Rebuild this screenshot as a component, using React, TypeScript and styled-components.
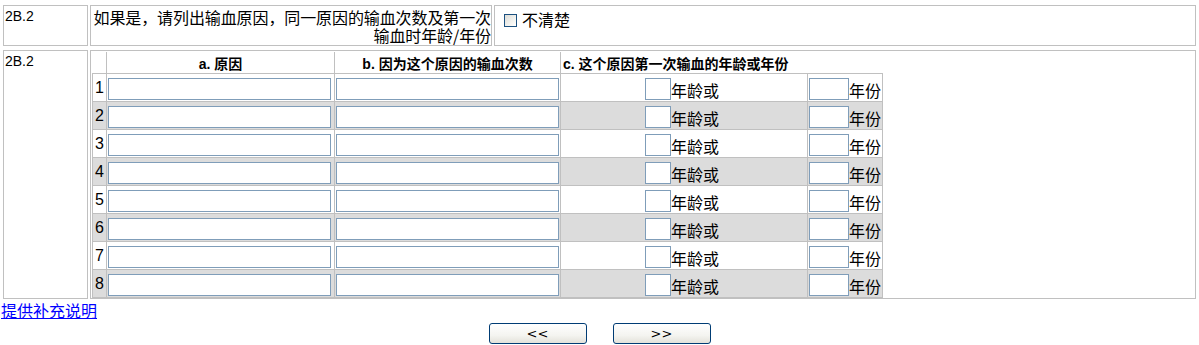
import React from "react";
import styled, { createGlobalStyle } from "styled-components";

const GlobalStyle = createGlobalStyle`
  body {
    margin: 0;
    background: #fff;
    color: #000;
    font-family: "Liberation Sans", "Noto Sans CJK SC", sans-serif;
  }
`;

const Page = styled.div`
  padding: 3px 1px 0;
`;

const QTable = styled.table`
  width: 100%;
  border-collapse: separate;
  border-spacing: 2px;
`;

const Cell = styled.td`
  box-sizing: border-box;
  border: 1px solid #c0c0c0;
  vertical-align: top;
`;

const LabelCell = styled(Cell)`
  width: 85px;
  padding: 2px 1px 0;
  font-size: 14px;
  line-height: 16px;
`;

const QuestionCell = styled(Cell)`
  width: 402px;
  padding: 2px 0 1px;
  font-size: 16px;
  line-height: 18px;
  text-align: right;
  white-space: nowrap;
  letter-spacing: -0.1px;
  font-family: "Noto Sans CJK SC", "Liberation Sans", sans-serif;
`;

const AnswerCell = styled(Cell)`
  padding: 4px 2px 0 9px;
  font-size: 16px;
  line-height: 18px;
  font-family: "Noto Sans CJK SC", "Liberation Sans", sans-serif;
`;

const GridCell = styled(Cell)`
  padding: 1px 1px 0;
`;

const Check = styled.input`
  appearance: none;
  box-sizing: border-box;
  width: 13px;
  height: 13px;
  margin: 0 5px 0 0;
  vertical-align: -1px;
  border: 1px solid #1c5180;
  background: linear-gradient(135deg, #dcdcd7 0%, #f6f6f3 70%, #fff 100%);
`;

const Grid = styled.table`
  border-collapse: collapse;
  table-layout: fixed;
  width: 790px;
`;

const Head = styled.th<{ $align?: string; $first?: boolean }>`
  height: 21px;
  padding: 0 2px;
  font-size: 14px;
  font-weight: bold;
  text-align: ${(p) => p.$align || "center"};
  border-left: ${(p) => (p.$first ? "none" : "1px solid #c0c0c0")};
  white-space: nowrap;
  font-family: "Liberation Sans", "Noto Sans CJK SC", sans-serif;
`;

const Row = styled.tr<{ $shaded: boolean }>`
  background: ${(p) => (p.$shaded ? "#dcdcdc" : "#fff")};
`;

const Td = styled.td<{ $align?: string }>`
  height: 27px;
  padding: 0 2px;
  border: 1px solid #c0c0c0;
  text-align: ${(p) => p.$align || "left"};
  vertical-align: middle;
  white-space: nowrap;
  font-size: 16px;
  font-family: "Noto Sans CJK SC", "Liberation Sans", sans-serif;
`;

const InputTd = styled(Td)`
  padding: 0 1px;
`;

const NumTd = styled(Td)`
  padding: 0;
  font-family: "Liberation Sans", sans-serif;
`;

const AgeTd = styled(Td)`
  padding: 0 4px 0 0;
`;

const YearTd = styled(Td)`
  padding: 0 1px;
`;

const TextBox = styled.input<{ $w: number }>`
  box-sizing: border-box;
  width: ${(p) => p.$w}px;
  height: 22px;
  margin: 0;
  padding: 1px 2px;
  border: 1px solid #7f9db9;
  background: #fff;
  vertical-align: middle;
`;

const Unit = styled.span`
  vertical-align: middle;
  line-height: 18px;
`;

const MoreLink = styled.a`
  display: inline-block;
  color: #0000ff;
  text-decoration: underline;
  font-size: 16px;
  line-height: 18px;
  font-family: "Noto Sans CJK SC", "Liberation Sans", sans-serif;
`;

const Buttons = styled.div`
  display: flex;
  justify-content: center;
  gap: 26px;
  margin-top: 2px;
`;

const NavButton = styled.button`
  box-sizing: border-box;
  width: 98px;
  height: 21px;
  padding: 0;
  border: 1px solid #003c74;
  border-radius: 3px;
  background: linear-gradient(to bottom, #ffffff 0%, #f4f4f0 60%, #e3e2da 100%);
  font-family: "DejaVu Sans", sans-serif;
  font-size: 13px;
  line-height: 17px;
  color: #000;
`;

const rows = [1, 2, 3, 4, 5, 6, 7, 8];

export default function App() {
  return (
    <Page>
      <GlobalStyle />
      <QTable>
        <tbody>
          <tr>
            <LabelCell>2B.2</LabelCell>
            <QuestionCell>
              如果是，请列出输血原因，同一原因的输血次数及第一次
              <br />
              输血时年龄/年份
            </QuestionCell>
            <AnswerCell>
              <Check type="checkbox" />
              不清楚
            </AnswerCell>
          </tr>
        </tbody>
      </QTable>
      <QTable>
        <tbody>
          <tr>
            <LabelCell>2B.2</LabelCell>
            <GridCell>
              <Grid>
                <colgroup>
                  <col style={{ width: 14 }} />
                  <col style={{ width: 228 }} />
                  <col style={{ width: 226 }} />
                  <col style={{ width: 247 }} />
                  <col style={{ width: 75 }} />
                </colgroup>
                <thead>
                  <tr>
                    <Head $first />
                    <Head>a. 原因</Head>
                    <Head>b. 因为这个原因的输血次数</Head>
                    <Head colSpan={2} $align="left">
                      c. 这个原因第一次输血的年龄或年份
                    </Head>
                  </tr>
                </thead>
                <tbody>
                  {rows.map((n) => (
                    <Row key={n} $shaded={n % 2 === 0}>
                      <NumTd $align="center">{n}</NumTd>
                      <InputTd>
                        <TextBox $w={223} />
                      </InputTd>
                      <InputTd>
                        <TextBox $w={223} />
                      </InputTd>
                      <AgeTd $align="center">
                        <TextBox $w={26} />
                        <Unit>年龄或</Unit>
                      </AgeTd>
                      <YearTd>
                        <TextBox $w={40} />
                        <Unit>年份</Unit>
                      </YearTd>
                    </Row>
                  ))}
                </tbody>
              </Grid>
            </GridCell>
          </tr>
        </tbody>
      </QTable>
      <MoreLink href="#">提供补充说明</MoreLink>
      <Buttons>
        <NavButton>&lt;&lt;</NavButton>
        <NavButton>&gt;&gt;</NavButton>
      </Buttons>
    </Page>
  );
}
